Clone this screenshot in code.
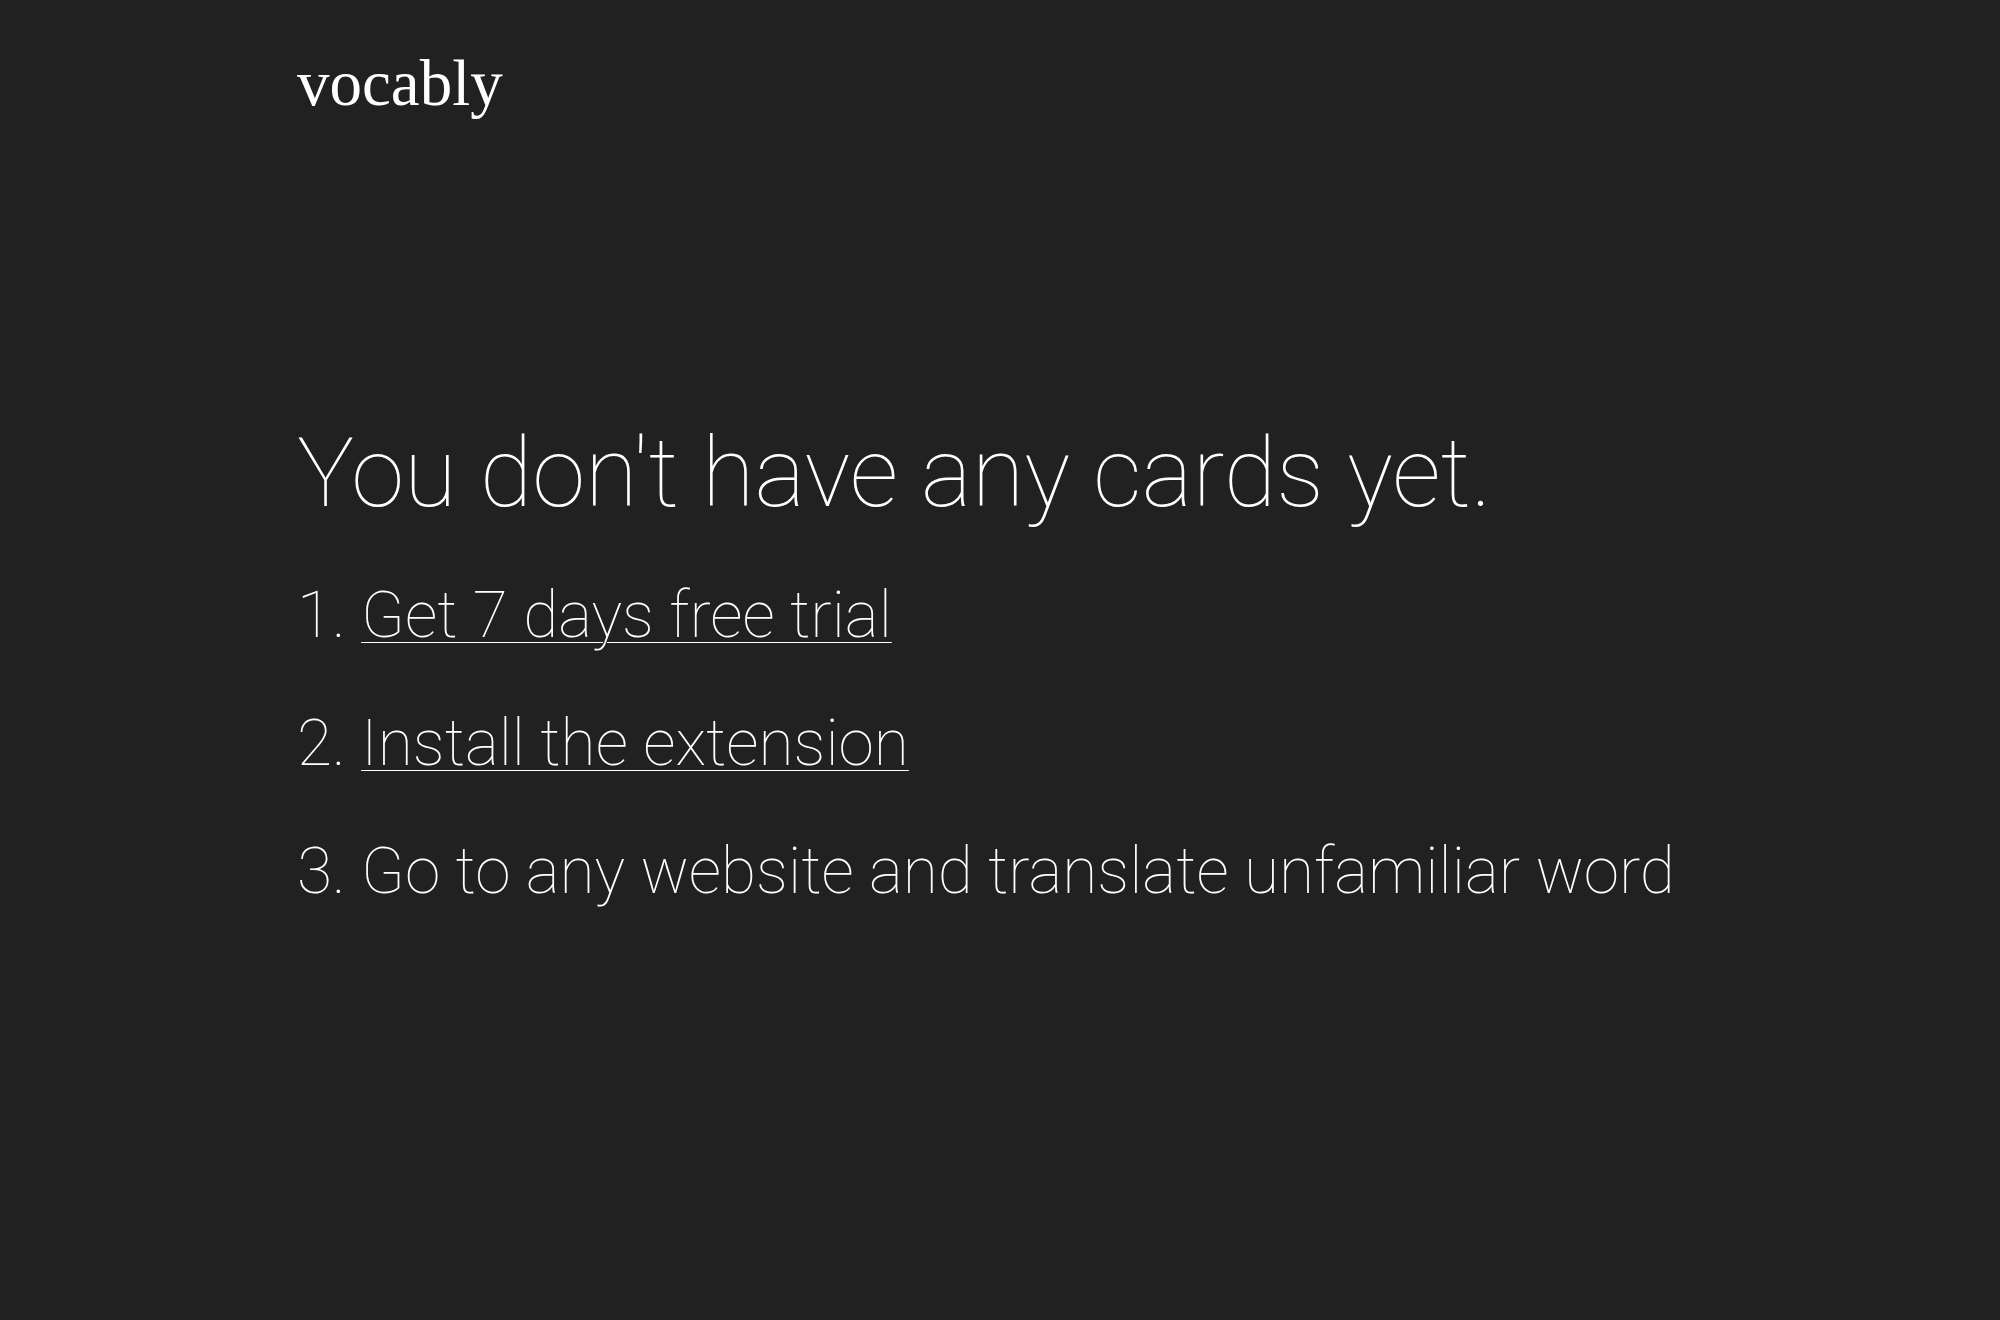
export default function App() {
  return (
    <div className="min-h-[1320px] w-full bg-[#212121] text-white">
      <div className="px-[297px]">
        {/* Logo */}
        <div className="pt-[51px]">
          <a
            href="#"
            className="text-[65px] leading-none text-white"
            style={{ fontFamily: '"Liberation Serif", serif' }}
          >
            vocably
          </a>
        </div>

        {/* Empty state */}
        <div
          className="mt-[309px] font-thin"
          style={{ fontFamily: 'Roboto, "Noto Sans", sans-serif' }}
        >
          <h1 className="text-[96px] leading-[96px] font-thin">
            You don't have any cards yet.
          </h1>
          <ol className="mt-[31px] text-[64px] leading-[128px]">
            <li>
              1.{" "}
              <a href="#" className="underline decoration-1 underline-offset-[5px]">
                Get 7 days free trial
              </a>
            </li>
            <li>
              2.{" "}
              <a href="#" className="underline decoration-1 underline-offset-[5px]">
                Install the extension
              </a>
            </li>
            <li>3. Go to any website and translate unfamiliar word</li>
          </ol>
        </div>
      </div>
    </div>
  );
}
